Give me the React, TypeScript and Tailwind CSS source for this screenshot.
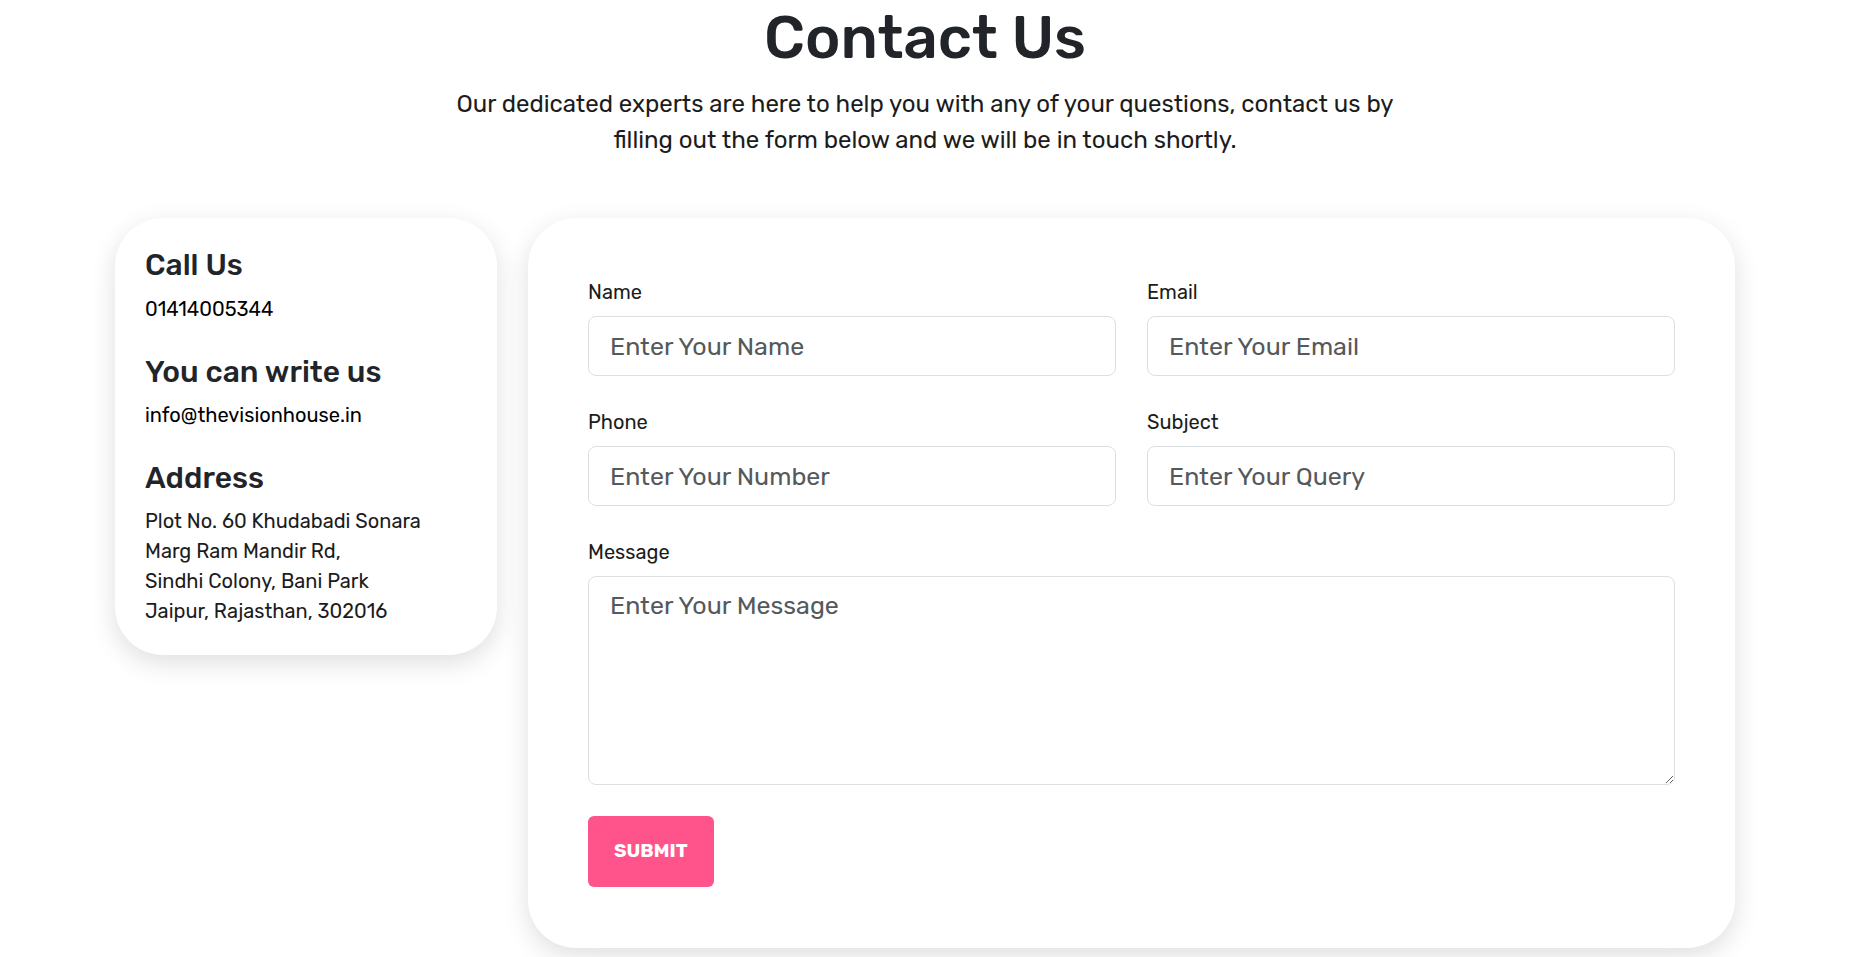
export default function App() {
  return (
    <div className="min-h-screen bg-white font-['Rubik','Inter',sans-serif] text-[#212529]">
      <div className="ml-[115px] w-[1620px] pb-[10px]">
        <div className="flex flex-col items-center">
          <h1 className="mt-[2px] text-[60px] font-medium leading-[72px]">Contact Us</h1>
          <p className="mt-[12px] max-w-[960px] text-center text-[24px] leading-[36px] text-[#1c1c1c]">
            Our dedicated experts are here to help you with any of your questions, contact us by filling out the form below and we will be in touch shortly.
          </p>
        </div>

        <div className="mt-[60px] flex items-start gap-[31px]">
          <div className="w-[382px] shrink-0 rounded-[48px] bg-white px-[30px] pt-[29px] pb-[29px] shadow-[0_8px_26px_rgba(0,0,0,0.13)]">
            <h3 className="text-[30px] font-medium leading-[36px]">Call Us</h3>
            <p className="mt-[11px] text-[20px] leading-[30px] text-black">01414005344</p>

            <h3 className="mt-[30px] text-[30px] font-medium leading-[36px]">You can write us</h3>
            <p className="mt-[10px] text-[20px] leading-[30px] text-black">info@thevisionhouse.in</p>

            <h3 className="mt-[30px] text-[30px] font-medium leading-[36px]">Address</h3>
            <p className="mt-[10px] text-[20px] leading-[30px] text-[#1c1c1c]">
              Plot No. 60 Khudabadi Sonara
              <br />
              Marg Ram Mandir Rd,
              <br />
              Sindhi Colony, Bani Park
              <br />
              Jaipur, Rajasthan, 302016
            </p>
          </div>

          <form className="w-[1207px] rounded-[48px] bg-white px-[60px] pt-[61px] pb-[61px] shadow-[0_8px_26px_rgba(0,0,0,0.13)]">
            <div className="grid grid-cols-2 gap-x-[31px] gap-y-[33px]">
              <Field label="Name" placeholder="Enter Your Name" />
              <Field label="Email" placeholder="Enter Your Email" />
              <Field label="Phone" placeholder="Enter Your Number" />
              <Field label="Subject" placeholder="Enter Your Query" />
              <div className="col-span-2 flex flex-col">
                <label className="text-[20px] leading-[27px] text-[#1c1c1c]">Message</label>
                <textarea
                  placeholder="Enter Your Message"
                  className="mt-[10px] h-[209px] rounded-[8px] border border-[#dcdfe3] px-[21px] py-[11px] text-[25px] leading-[36px] outline-none placeholder:text-[#55595c]"
                />
              </div>
            </div>
            <button
              type="button"
              className="mt-[31px] h-[71px] rounded-[6px] bg-[#ff538b] px-[26px] text-[19px] font-bold text-white"
            >
              SUBMIT
            </button>
          </form>
        </div>
      </div>
    </div>
  );
}

function Field({ label, placeholder }: { label: string; placeholder: string }) {
  return (
    <div className="flex flex-col">
      <label className="text-[20px] leading-[27px] text-[#1c1c1c]">{label}</label>
      <input
        placeholder={placeholder}
        className="mt-[10px] h-[60px] rounded-[8px] border border-[#dcdfe3] px-[21px] text-[25px] outline-none placeholder:text-[#55595c]"
      />
    </div>
  );
}
